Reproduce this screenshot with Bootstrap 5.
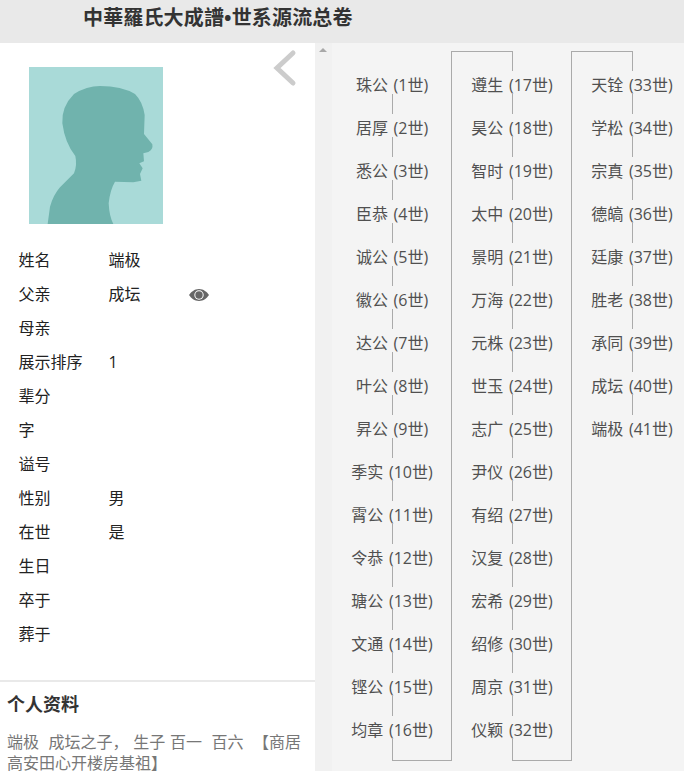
<!DOCTYPE html>
<html lang="zh">
<head>
<meta charset="utf-8">
<title>世系源流总卷</title>
<link href="https://cdn.jsdelivr.net/npm/bootstrap@5.3.0/dist/css/bootstrap.min.css" rel="stylesheet">
<style>
html,body{height:771px;overflow:hidden}
body{font-family:"Open Sans","Noto Sans CJK SC",sans-serif;font-size:16px;color:#333;background:#fff}
.top-bar{height:43px;background:#e9e9e9;padding-left:83px;line-height:35px;font-size:20px;font-weight:700;color:#333;letter-spacing:.15px}
.main-area{height:728px}
.left-pane{width:315px;flex:none;position:relative;overflow:hidden}
.avatar-box{display:block;width:134px;height:157px;margin:24px 0 0 29px}
.back-arrow{position:absolute;left:272px;top:6px}
.info-list{margin:19px 0 0 18.500px;height:437px;color:#222}
.info-row{height:34px;line-height:34px}
.info-key{width:90px;flex:none}
.info-val{width:80px;flex:none}
.eye-mark{margin-top:2px}
.profile-box{border-top:2px solid #e9e9e9;padding:6px 7px 0}
.profile-title{font-size:18px;font-weight:700;line-height:32px;margin:0 0 12px;color:#333}
.profile-text{line-height:21px;color:#777;white-space:pre-wrap;word-spacing:.6px;margin:0}
.scroll-rail{width:17px;flex:none;background:#f1f1f1;position:relative}
.scroll-up{position:absolute;left:4px;top:5px;width:0;height:0;border-left:4px solid transparent;border-right:4px solid transparent;border-bottom:4px solid #a8a8a8}
.tree-pane{flex:1 1 auto;background:#f4f4f4;overflow:hidden;padding-top:8px}
.tree-col{width:120px;flex:none;height:710px;position:relative;padding-top:20px;text-align:center;color:#505050}
.tree-col::after{content:"";position:absolute;left:60px;width:60px;border-left:1px solid #aaa}
.tree-one::after{top:40px;bottom:0;border-bottom:1px solid #aaa}
.tree-two::after{top:0;bottom:0;border-bottom:1px solid #aaa}
.tree-three::after{top:0;height:368px}
.tree-two::before,.tree-three::before{content:"";position:absolute;left:-1px;top:0;bottom:0;width:61px;border-left:1px solid #aaa;border-top:1px solid #aaa}
.tree-item{height:43px;position:relative;z-index:1}
.tree-item span{display:inline-block;line-height:18px;padding-top:5px;background:#f4f4f4;word-spacing:1.500px}
</style>
</head>
<body>
<div class="top-bar">中華羅氏大成譜•世系源流总卷</div>
<div class="main-area d-flex">
  <div class="left-pane">
    <svg class="avatar-box" viewBox="87 201 402 471" preserveAspectRatio="none" role="img" aria-label="头像">
      <rect x="87" y="201" width="402" height="471" fill="#a9dad8"/>
      <path fill="#70b3ad" d="M143 672 L150 620 Q160 585 180 562 L222 520 Q232 495 226 468 Q195 430 187 370 Q184 320 222 282 Q260 258 300 258 Q365 258 405 282 Q428 305 434 345 L432 402 L457 433 Q460 448 445 456 L430 460 L432 484 L418 490 L428 505 L420 522 L424 542 L400 547 L345 545 Q330 570 326 610 Q328 650 340 672 Z"/>
    </svg>
    <svg class="back-arrow" width="26" height="38" viewBox="0 0 26 38" aria-hidden="true"><path d="M21 4 L5 19 L21 34" fill="none" stroke="#ccc" stroke-width="5" stroke-linecap="round" stroke-linejoin="miter"/></svg>
    <div class="info-list">
      <div class="info-row d-flex"><div class="info-key">姓名</div><div class="info-val">端极</div></div>
      <div class="info-row d-flex align-items-center"><div class="info-key">父亲</div><div class="info-val">成坛</div>
        <svg class="eye-mark" width="20" height="12" viewBox="0 0 20 12" aria-hidden="true"><path fill="#666" d="M10 0C5.500 0 2 3 0 6c2 3 5.500 6 10 6s8-3 10-6c-2-3-5.500-6-10-6z"/><circle cx="10" cy="6" r="4.700" fill="#fff"/><circle cx="10" cy="6" r="3.700" fill="#666"/></svg>
      </div>
      <div class="info-row d-flex"><div class="info-key">母亲</div></div>
      <div class="info-row d-flex"><div class="info-key">展示排序</div><div class="info-val">1</div></div>
      <div class="info-row d-flex"><div class="info-key">辈分</div></div>
      <div class="info-row d-flex"><div class="info-key">字</div></div>
      <div class="info-row d-flex"><div class="info-key">谥号</div></div>
      <div class="info-row d-flex"><div class="info-key">性别</div><div class="info-val">男</div></div>
      <div class="info-row d-flex"><div class="info-key">在世</div><div class="info-val">是</div></div>
      <div class="info-row d-flex"><div class="info-key">生日</div></div>
      <div class="info-row d-flex"><div class="info-key">卒于</div></div>
      <div class="info-row d-flex"><div class="info-key">葬于</div></div>
    </div>
    <div class="profile-box">
      <h2 class="profile-title">个人资料</h2>
      <p class="profile-text">端极  成坛之子， 生子 百一  百六  【商居高安田心开楼房基祖】</p>
    </div>
  </div>
  <div class="scroll-rail"><div class="scroll-up"></div></div>
  <div class="tree-pane d-flex">
    <div class="tree-col tree-one">
      <div class="tree-item"><span>珠公 (1世)</span></div>
      <div class="tree-item"><span>居厚 (2世)</span></div>
      <div class="tree-item"><span>悉公 (3世)</span></div>
      <div class="tree-item"><span>臣恭 (4世)</span></div>
      <div class="tree-item"><span>诚公 (5世)</span></div>
      <div class="tree-item"><span>徽公 (6世)</span></div>
      <div class="tree-item"><span>达公 (7世)</span></div>
      <div class="tree-item"><span>叶公 (8世)</span></div>
      <div class="tree-item"><span>昇公 (9世)</span></div>
      <div class="tree-item"><span>季实 (10世)</span></div>
      <div class="tree-item"><span>霄公 (11世)</span></div>
      <div class="tree-item"><span>令恭 (12世)</span></div>
      <div class="tree-item"><span>瑭公 (13世)</span></div>
      <div class="tree-item"><span>文通 (14世)</span></div>
      <div class="tree-item"><span>铿公 (15世)</span></div>
      <div class="tree-item"><span>均章 (16世)</span></div>
    </div>
    <div class="tree-col tree-two">
      <div class="tree-item"><span>遵生 (17世)</span></div>
      <div class="tree-item"><span>昊公 (18世)</span></div>
      <div class="tree-item"><span>智时 (19世)</span></div>
      <div class="tree-item"><span>太中 (20世)</span></div>
      <div class="tree-item"><span>景明 (21世)</span></div>
      <div class="tree-item"><span>万海 (22世)</span></div>
      <div class="tree-item"><span>元株 (23世)</span></div>
      <div class="tree-item"><span>世玉 (24世)</span></div>
      <div class="tree-item"><span>志广 (25世)</span></div>
      <div class="tree-item"><span>尹仪 (26世)</span></div>
      <div class="tree-item"><span>有绍 (27世)</span></div>
      <div class="tree-item"><span>汉复 (28世)</span></div>
      <div class="tree-item"><span>宏希 (29世)</span></div>
      <div class="tree-item"><span>绍修 (30世)</span></div>
      <div class="tree-item"><span>周京 (31世)</span></div>
      <div class="tree-item"><span>仪颖 (32世)</span></div>
    </div>
    <div class="tree-col tree-three">
      <div class="tree-item"><span>天铨 (33世)</span></div>
      <div class="tree-item"><span>学松 (34世)</span></div>
      <div class="tree-item"><span>宗真 (35世)</span></div>
      <div class="tree-item"><span>德皜 (36世)</span></div>
      <div class="tree-item"><span>廷康 (37世)</span></div>
      <div class="tree-item"><span>胜老 (38世)</span></div>
      <div class="tree-item"><span>承同 (39世)</span></div>
      <div class="tree-item"><span>成坛 (40世)</span></div>
      <div class="tree-item"><span>端极 (41世)</span></div>
    </div>
  </div>
</div>
<script src="https://cdn.jsdelivr.net/npm/bootstrap@5.3.0/dist/js/bootstrap.bundle.min.js"></script>
</body>
</html>
